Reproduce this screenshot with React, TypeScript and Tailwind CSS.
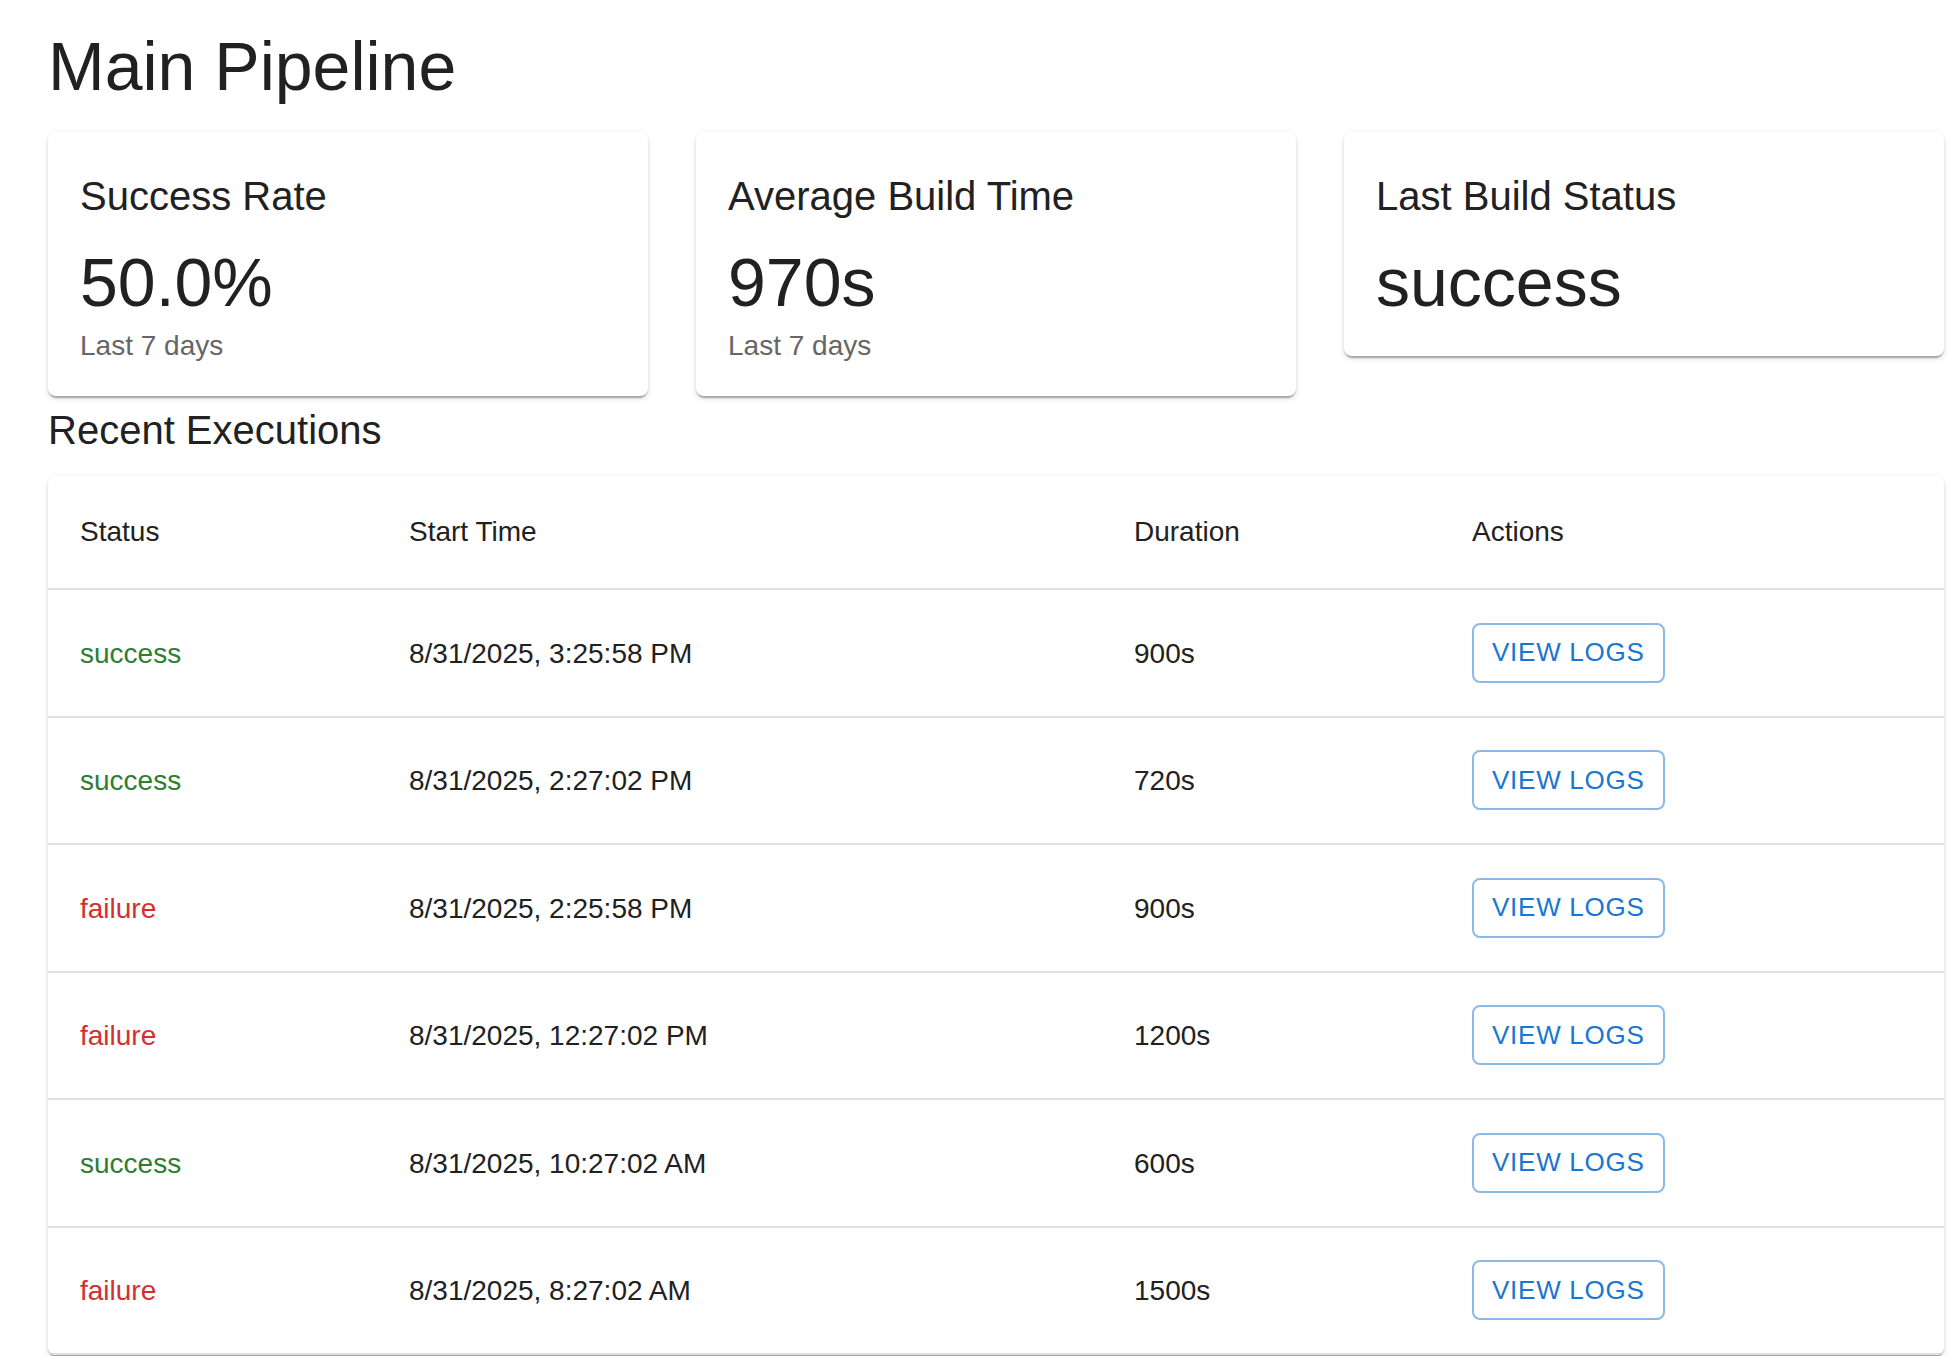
import React from 'react';

const stats = [
  { title: 'Success Rate', value: '50.0%', note: 'Last 7 days' },
  { title: 'Average Build Time', value: '970s', note: 'Last 7 days' },
  { title: 'Last Build Status', value: 'success', note: '' },
];

const runs = [
  { status: 'success', start: '8/31/2025, 3:25:58 PM', duration: '900s' },
  { status: 'success', start: '8/31/2025, 2:27:02 PM', duration: '720s' },
  { status: 'failure', start: '8/31/2025, 2:25:58 PM', duration: '900s' },
  { status: 'failure', start: '8/31/2025, 12:27:02 PM', duration: '1200s' },
  { status: 'success', start: '8/31/2025, 10:27:02 AM', duration: '600s' },
  { status: 'failure', start: '8/31/2025, 8:27:02 AM', duration: '1500s' },
];

const paperShadow =
  'shadow-[0_4px_2px_-2px_rgba(0,0,0,0.2),0_2px_2px_0_rgba(0,0,0,0.14),0_2px_6px_0_rgba(0,0,0,0.12)]';

export default function App() {
  return (
    <div className="min-h-screen bg-white pl-[48px] pr-[16px] pt-[24px] font-['Liberation_Sans',Arial,sans-serif] text-[#212121]">
      <h1 className="mb-[24px] text-[68px] font-normal leading-[84px]">Main Pipeline</h1>

      <div className="grid grid-cols-3 items-start gap-[48px]">
        {stats.map((s) => (
          <div key={s.title} className={`rounded-[8px] bg-white px-[32px] pb-[32px] pt-[32px] ${paperShadow}`}>
            <h2 className="mb-[12px] text-[40px] font-normal leading-[64px]">{s.title}</h2>
            <div className="text-[68px] leading-[84px]">{s.value}</div>
            {s.note && <p className="-mb-[2px] mt-[2px] text-[28px] leading-[40px] text-[#666666]">{s.note}</p>}
          </div>
        ))}
      </div>

      <h2 className="mb-[14px] mt-[2px] text-[40px] font-normal leading-[64px]">Recent Executions</h2>

      <div className={`overflow-hidden rounded-[8px] bg-white ${paperShadow}`}>
        <table className="w-full table-fixed border-collapse text-left text-[28px]">
          <thead>
            <tr className="border-b-2 border-[#e0e0e0]">
              <th className="w-[329px] p-[32px] font-normal leading-[48px]">Status</th>
              <th className="w-[725px] p-[32px] font-normal leading-[48px]">Start Time</th>
              <th className="w-[338px] p-[32px] font-normal leading-[48px]">Duration</th>
              <th className="p-[32px] font-normal leading-[48px]">Actions</th>
            </tr>
          </thead>
          <tbody>
            {runs.map((r, i) => (
              <tr key={i} className="h-[127.5px] border-b-2 border-[#e0e0e0]">
                <td
                  className={`px-[32px] pt-[2px] align-middle leading-[40px] ${
                    r.status === 'success' ? 'text-[#2e7d32]' : 'text-[#d32f2f]'
                  }`}
                >
                  {r.status}
                </td>
                <td className="px-[32px] pt-[2px] align-middle leading-[40px]">{r.start}</td>
                <td className="px-[32px] pt-[2px] align-middle leading-[40px]">{r.duration}</td>
                <td className="px-[32px] align-middle">
                  <button className="flex h-[60px] items-center rounded-[8px] border-2 border-[rgba(25,118,210,0.5)] px-[18px] text-[26px] uppercase tracking-[0.74px] text-[#1976d2]">
                    View logs
                  </button>
                </td>
              </tr>
            ))}
          </tbody>
        </table>
      </div>
    </div>
  );
}
